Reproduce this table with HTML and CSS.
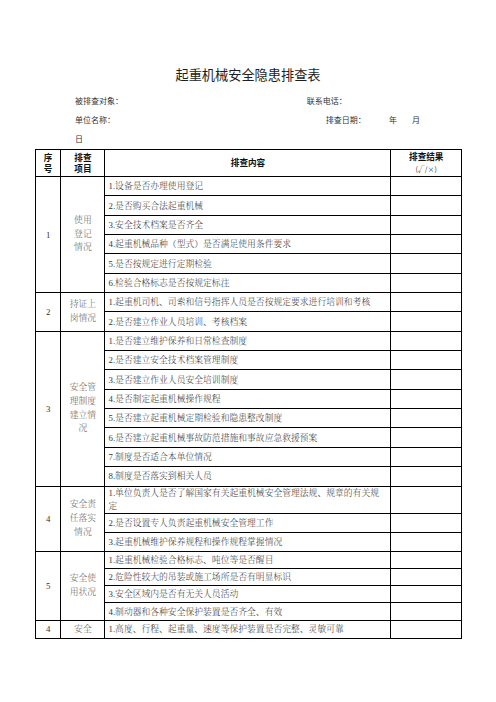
FILE: index.html
```html
<!DOCTYPE html>
<html lang="zh-CN">
<head>
<meta charset="utf-8">
<title>起重机械安全隐患排查表</title>
<link rel="stylesheet" href="styles.css">
</head>
<body>
<h1 class="title">起重机械安全隐患排查表</h1>
<div class="meta">
  <div class="meta-row"><span class="m1">被排查对象：</span><span>联系电话：</span></div>
  <div class="meta-row"><span class="m2">单位名称：</span><span class="m3">排查日期：</span><span class="m4">年</span><span>月</span></div>
  <div class="meta-row"><span>日</span></div>
</div>
<table class="sheet">
  <colgroup>
    <col class="c-no"><col class="c-item"><col class="c-content"><col class="c-result">
  </colgroup>
  <thead>
    <tr class="hd">
      <th>序<br>号</th>
      <th>排查<br>项目</th>
      <th>排查内容</th>
      <th>排查结果<br><span class="mark">(√/×)</span></th>
    </tr>
  </thead>
  <tbody>
    <tr class="r"><td class="no" rowspan="6">1</td><td class="item" rowspan="6">使用<br>登记<br>情况</td><td class="ct">1.设备是否办理使用登记</td><td></td></tr>
    <tr class="r"><td class="ct">2.是否购买合法起重机械</td><td></td></tr>
    <tr class="r"><td class="ct">3.安全技术档案是否齐全</td><td></td></tr>
    <tr class="r"><td class="ct">4.起重机械品种（型式）是否满足使用条件要求</td><td></td></tr>
    <tr class="r"><td class="ct">5.是否按规定进行定期检验</td><td></td></tr>
    <tr class="r"><td class="ct">6.检验合格标志是否按规定标注</td><td></td></tr>

    <tr class="r"><td class="no" rowspan="2">2</td><td class="item" rowspan="2">持证上<br>岗情况</td><td class="ct">1.起重机司机、司索和信号指挥人员是否按规定要求进行培训和考核</td><td></td></tr>
    <tr class="r"><td class="ct">2.是否建立作业人员培训、考核档案</td><td></td></tr>

    <tr class="r"><td class="no" rowspan="8">3</td><td class="item" rowspan="8">安全管<br>理制度<br>建立情<br>况</td><td class="ct">1.是否建立维护保养和日常检查制度</td><td></td></tr>
    <tr class="r"><td class="ct">2.是否建立安全技术档案管理制度</td><td></td></tr>
    <tr class="r"><td class="ct">3.是否建立作业人员安全培训制度</td><td></td></tr>
    <tr class="r"><td class="ct">4.是否制定起重机械操作规程</td><td></td></tr>
    <tr class="r"><td class="ct">5.是否建立起重机械定期检验和隐患整改制度</td><td></td></tr>
    <tr class="r"><td class="ct">6.是否建立起重机械事故防范措施和事故应急救援预案</td><td></td></tr>
    <tr class="r"><td class="ct">7.制度是否适合本单位情况</td><td></td></tr>
    <tr class="r"><td class="ct">8.制度是否落实到相关人员</td><td></td></tr>

    <tr class="r2"><td class="no" rowspan="3">4</td><td class="item" rowspan="3">安全责<br>任落实<br>情况</td><td class="ct wrap">1.单位负责人是否了解国家有关起重机械安全管理法规、规章的有关规定</td><td></td></tr>
    <tr class="r"><td class="ct">2.是否设置专人负责起重机械安全管理工作</td><td></td></tr>
    <tr class="r"><td class="ct">3.起重机械维护保养规程和操作规程掌握情况</td><td></td></tr>

    <tr class="rs"><td class="no" rowspan="4">5</td><td class="item" rowspan="4">安全使<br>用状况</td><td class="ct">1.起重机械检验合格标志、吨位等是否醒目</td><td></td></tr>
    <tr class="rs"><td class="ct">2.危险性较大的吊装或施工场所是否有明显标识</td><td></td></tr>
    <tr class="rs"><td class="ct">3.安全区域内是否有无关人员活动</td><td></td></tr>
    <tr class="rs"><td class="ct">4.制动器和各种安全保护装置是否齐全、有效</td><td></td></tr>

    <tr class="rl"><td class="no">4</td><td class="item">安全</td><td class="ct">1.高度、行程、起重量、速度等保护装置是否完整、灵敏可靠</td><td></td></tr>
  </tbody>
</table>
</body>
</html>
```

FILE: styles.css
```css
html, body {
  margin: 0;
  padding: 0;
  background: #fff;
}
body {
  font-family: "Noto Sans CJK SC", "Noto Sans", sans-serif;
  color: #222;
}
.title {
  margin: 65px 0 0;
  font-size: 13.2px;
  line-height: 20px;
  font-weight: normal;
  text-align: center;
  color: #1e1e1e;
  letter-spacing: 0;
}
.meta {
  margin-top: 5.5px;
  padding-left: 75px;
  font-size: 8px;
  color: #333;
}
.meta-row {
  display: flex;
  height: 19px;
  line-height: 19px;
  white-space: nowrap;
}
.m1 { width: 231.7px; }
.m2 { width: 250.7px; }
.m3 { width: 63.3px; }
.m4 { width: 23px; }

.sheet {
  margin: 1.5px 0 0 35px;
  width: 426px;
  border-collapse: collapse;
  table-layout: fixed;
}
.c-no { width: 25.3px; }
.c-item { width: 44.2px; }
.c-content { width: 286px; }
.c-result { width: 70.5px; }

.sheet th, .sheet td {
  border: 1px solid #000;
  padding: 0;
  vertical-align: middle;
}
.sheet th {
  font-size: 8.6px;
  line-height: 11.3px;
  font-weight: bold;
  color: #111;
  text-align: center;
}
.mark {
  font-weight: normal;
  font-size: 7px;
  color: #333;
}
.hd { height: 27px; }
.r { height: 19.35px; }
.r2 { height: 26px; }
.rs { height: 17.1px; }
.rl { height: 18.6px; }

.no {
  font-family: "Liberation Serif", "Noto Sans CJK SC", serif;
  font-size: 8.8px;
  color: #333;
  text-align: center;
}
.item {
  font-family: "Liberation Serif", "Noto Serif CJK SC", "Noto Sans CJK SC", serif;
  font-size: 8.8px;
  line-height: 13.6px;
  color: #666;
  text-align: center;
  white-space: nowrap;
  font-weight: 300;
}
.ct {
  font-family: "Liberation Serif", "Noto Serif CJK SC", "Noto Sans CJK SC", serif;
  font-size: 8.8px;
  line-height: 12px;
  color: #3a3a3a;
  padding: 0 8px 0 3px !important;
  text-align: left;
  white-space: nowrap;
  font-weight: 300;
}
.ct.wrap {
  white-space: normal;
  line-height: 13px;
}
```
